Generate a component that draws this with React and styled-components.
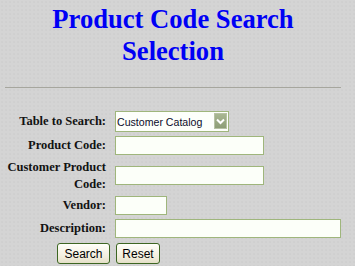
import React from "react";
import styled, { createGlobalStyle } from "styled-components";

const GlobalStyle = createGlobalStyle`
  html, body {
    margin: 0;
    padding: 0;
  }
  body {
    background-color: #d4d4d4;
    background-image: radial-gradient(#cacaca 0.6px, transparent 0.8px);
    background-size: 4px 4px;
    height: 266px;
    overflow: hidden;
  }
`;

const Page = styled.div`
  width: 346px;
  padding: 3px 0 0 0;
`;

const Title = styled.h1`
  margin: 0;
  font-family: "Liberation Serif", "Times New Roman", serif;
  font-weight: bold;
  font-size: 26.6px;
  line-height: 32px;
  color: #0000f5;
  text-align: center;
`;

const Rule = styled.hr`
  margin: 20px 0 0 5px;
  width: 336px;
  height: 0;
  border: none;
  border-top: 1px solid #a6a69e;
`;

const Form = styled.form`
  display: grid;
  grid-template-columns: 100px auto;
  column-gap: 9px;
  row-gap: 4px;
  align-items: center;
  padding: 23px 0 0 6px;
`;

const Label = styled.label`
  font-family: "Liberation Serif", "Times New Roman", serif;
  font-weight: bold;
  font-size: 12.5px;
  line-height: 16.5px;
  color: #121212;
  text-align: right;
  white-space: nowrap;
`;

const Field = styled.input`
  box-sizing: border-box;
  width: ${(p) => p.$width}px;
  height: 19px;
  margin: 0;
  padding: 1px 3px;
  border: 1px solid #9fb67c;
  background: #fcfff9;
  font-family: "Liberation Sans", Arial, sans-serif;
  font-size: 12px;
  outline: none;
`;

const SelectWrap = styled.div`
  position: relative;
  width: 114px;
  height: 21px;
`;

const Select = styled.select`
  box-sizing: border-box;
  width: 114px;
  height: 21px;
  margin: 0;
  padding: 0 0 0 1px;
  border: 1px solid #9fb67c;
  background: #fdfffb;
  appearance: none;
  -webkit-appearance: none;
  font-family: "Liberation Sans", Arial, sans-serif;
  font-size: 10.6px;
  color: #0c0c2a;
  outline: none;
`;

const DropButton = styled.span`
  position: absolute;
  top: 2px;
  right: 2px;
  width: 13px;
  height: 16px;
  box-sizing: border-box;
  border: 1px solid #b7c2a4;
  background: linear-gradient(#a9b792, #8d9d76);
  display: flex;
  align-items: center;
  justify-content: center;
  pointer-events: none;
`;

const Buttons = styled.div`
  grid-column: 1 / span 2;
  display: flex;
  gap: 6px;
  padding: 1px 0 0 51px;
`;

const Button = styled.button`
  box-sizing: border-box;
  width: ${(p) => p.$width}px;
  height: 21px;
  margin: 0;
  padding: 0;
  border: 1px solid #3d6622;
  border-radius: 3px;
  background: linear-gradient(#fffffa, #f1eddc 70%, #e4dfc8);
  font-family: "Liberation Sans", Arial, sans-serif;
  font-size: 12px;
  color: #000;
`;

export default function App() {
  return (
    <Page>
      <GlobalStyle />
      <Title>
        Product Code Search
        <br />
        Selection
      </Title>
      <Rule />
      <Form onSubmit={(e) => e.preventDefault()}>
        <Label htmlFor="table">Table to Search:</Label>
        <SelectWrap>
          <Select id="table" defaultValue="catalog">
            <option value="catalog">Customer Catalog</option>
          </Select>
          <DropButton>
            <svg width="9" height="7" viewBox="0 0 9 7">
              <path d="M1 1.5 L4.5 5 L8 1.5" fill="none" stroke="#fff" strokeWidth="2" />
            </svg>
          </DropButton>
        </SelectWrap>

        <Label htmlFor="code">Product Code:</Label>
        <Field id="code" $width={149} />

        <Label htmlFor="custcode">
          Customer Product
          <br />
          Code:
        </Label>
        <Field id="custcode" $width={149} />

        <Label htmlFor="vendor">Vendor:</Label>
        <Field id="vendor" $width={52} />

        <Label htmlFor="desc">Description:</Label>
        <Field id="desc" $width={226} />

        <Buttons>
          <Button type="submit" $width={53}>Search</Button>
          <Button type="reset" $width={44}>Reset</Button>
        </Buttons>
      </Form>
    </Page>
  );
}
